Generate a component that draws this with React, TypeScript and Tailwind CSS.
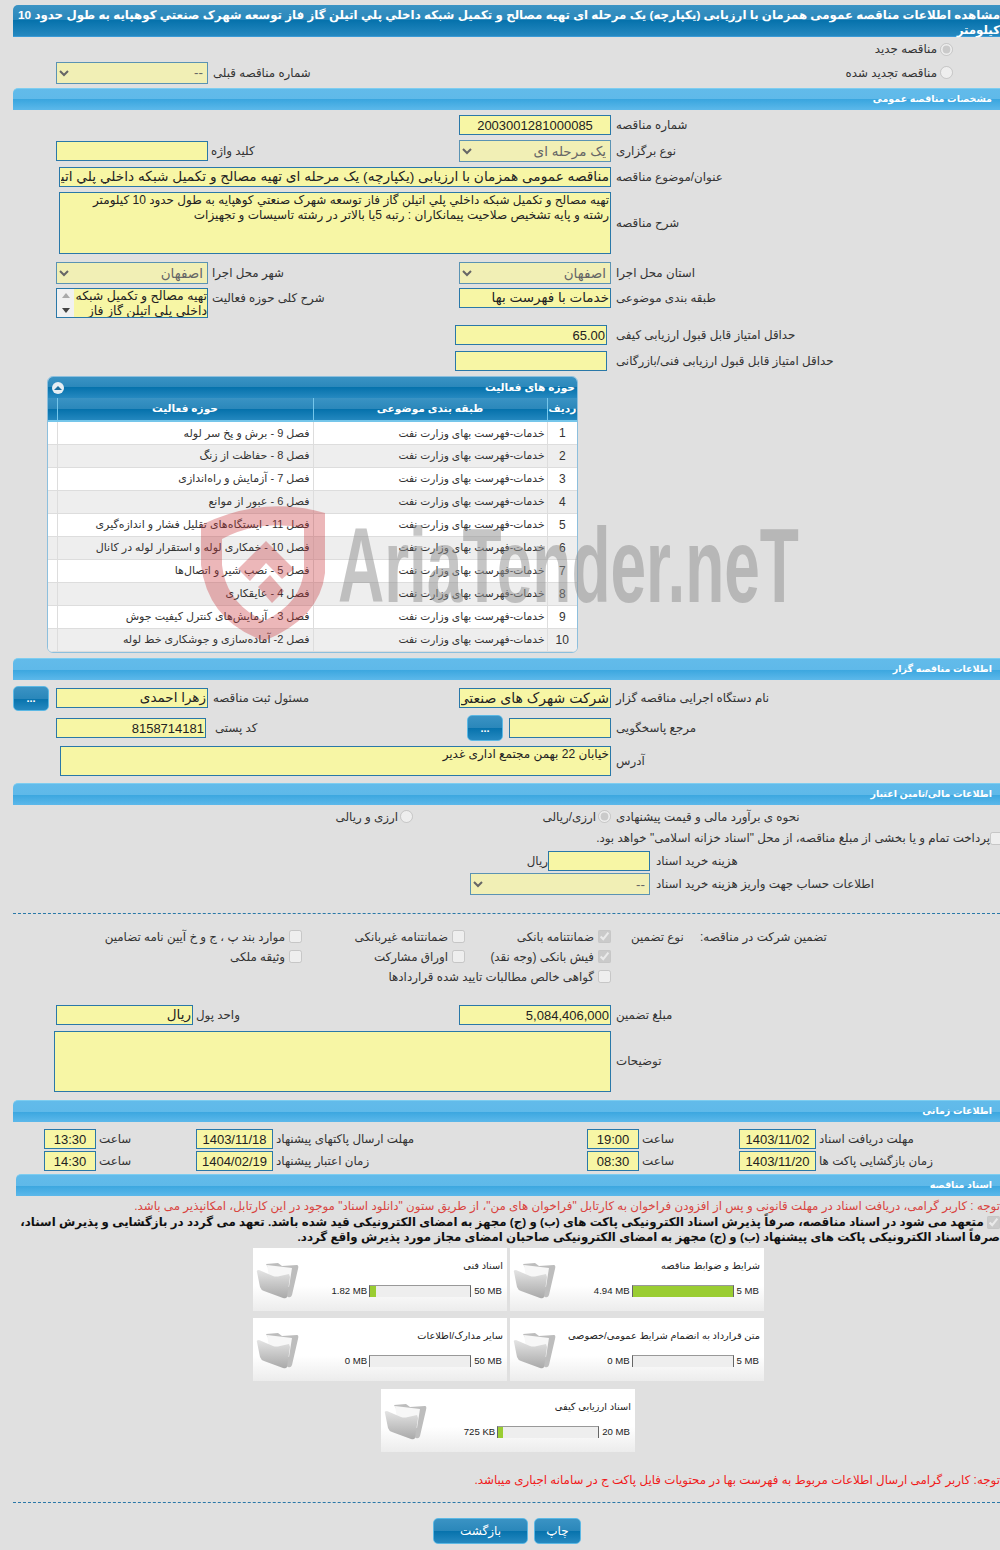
const activities = [
  "فصل 9 - برش و پخ سر لوله",
  "فصل 8 - حفاظت از زنگ",
  "فصل 7 - آزمایش و راه‌اندازی",
  "فصل 6 - عبور از موانع",
  "فصل 11 - ایستگاه‌های تقلیل فشار و اندازه‌گیری",
  "فصل 10 - خمکاری لوله و استقرار لوله در کانال",
  "فصل 5 - نصب شیر و اتصال‌ها",
  "فصل 4 - عایقکاری",
  "فصل 3 - آزمایش‌های کنترل کیفیت جوش",
  "فصل 2- آماده‌سازی و جوشکاری خط لوله",
]

const barBg = "bg-[linear-gradient(#3a93c4_0%,#2a87ba_50%,#0672ac_50%,#2689c0_100%)]"
const inputCls = "border border-[#2a78a8] bg-[#f7f6a5] text-[#222] px-[1px] outline-none"
const selectCls = "border border-[#5b93b3] bg-[#f1efb5] text-[13.5px] text-[#666] outline-none"

const Section = ({ title }: { title: string }) => (
  <div
    dir="rtl"
    className="h-[22px] border-t border-[#7dcdf0] bg-[linear-gradient(#62bbea_0%,#5fb9e9_50%,#3aa6df_50%,#5cb8ea_100%)] rounded-tl-[5px] pr-[8px] flex items-center text-[9.5px] font-bold text-white whitespace-nowrap"
  >
    {title}
  </div>
)

const Field = ({ value, className = "" }: { value?: string; className?: string }) => (
  <input readOnly dir="rtl" value={value ?? ""} className={`${inputCls} h-[20px] text-[13.5px] ${className}`} />
)

const Num = ({ value, className = "" }: { value: string; className?: string }) => (
  <input readOnly value={value} className={`${inputCls} h-[20px] text-[13px] ${className}`} />
)

const Select = ({ value, className = "" }: { value: string; className?: string }) => (
  <select disabled dir="rtl" defaultValue={value} className={`${selectCls} h-[22px] ${className}`}>
    <option>{value}</option>
  </select>
)

const Label = ({ children, className = "" }: { children: React.ReactNode; className?: string }) => (
  <span dir="rtl" className={`pt-[2px] text-[11.85px] text-left text-[#333] whitespace-nowrap ${className}`}>
    {children}
  </span>
)

const Check = ({ label, checked }: { label: string; checked?: boolean }) => (
  <label className="flex justify-end items-center gap-[4px]">
    <Label>{label}</Label>
    <input type="checkbox" disabled defaultChecked={checked} className="shrink-0" />
  </label>
)

const DotsButton = ({ className = "" }: { className?: string }) => (
  <button className={`w-[36px] h-[25px] rounded-[5px] border border-[#5cb8e4] ${barBg} text-white text-[11px] font-bold ${className}`}>
    ...
  </button>
)

const Folder = () => (
  <svg width="44" height="38" viewBox="0 0 44 38" className="shrink-0">
    <defs>
      <linearGradient id="folderFront" x1="0" y1="0" x2="0" y2="1">
        <stop offset="0" stopColor="#e4e4e4" />
        <stop offset="1" stopColor="#a9a9a9" />
      </linearGradient>
    </defs>
    <path d="M10 3 L22 2 L26 5 L41 4 Q43 4 42 8 L36 34 Q35 37 32 36 L28 34 Z" fill="#bdbdbd" />
    <path d="M11 4 L36 7 L33 26 L14 22 Z" fill="#f7f7f7" />
    <path d="M1 11 Q0 9 3 9 L17 15 Q20 16 24 15 L33 13 L34 16 L31 36 Q30 38 27 37 L8 30 Q5 29 4 26 Z" fill="url(#folderFront)" />
  </svg>
)

const DocCard = ({ title, used, max, pct }: { title: string; used: string; max: string; pct: number }) => (
  <div className="w-[254px] h-[63px] flex bg-[linear-gradient(#ffffff_0%,#ffffff_60%,#ececec_100%)]">
    <div className="pl-[3px] pt-[13px]">
      <Folder />
    </div>
    <div className="flex-1 flex flex-col items-end pr-[4px] pt-[11px]">
      <span dir="rtl" className="text-[9.8px] text-[#222] whitespace-nowrap">{title}</span>
      <div className="mt-[10px] flex items-center text-[9.6px] text-[#222]">
        <span className="mr-[2px]">{used}</span>
        <div className="w-[102px] h-[12px] bg-[#eeeeee] border-t border-[#999] border-x border-x-[#666]">
          <div className="h-full bg-[#9acd32]" style={{ width: `${pct}%` }} />
        </div>
        <span className="ml-[3px] mr-[1px]">{max}</span>
      </div>
    </div>
  </div>
)

const Watermark = () => (
  <div className="absolute inset-0 pointer-events-none">
    <svg width="130" height="140" viewBox="0 0 130 140" className="absolute left-[198px] top-[503px] opacity-35">
      <path
        fillRule="evenodd"
        fill="#c9343a"
        d="M3 22 Q65 -8 127 10 L127 70 Q122 115 66 138 Q10 118 3 62 Z M24 36 L24 62 Q28 100 66 118 Q104 100 106 66 L106 25 Q62 16 24 36 Z"
      />
      <path fill="#c9343a" d="M40 66 L68 38 L96 66 L84 76 L68 60 L52 78 Z M60 84 L72 72 L86 88 L74 100 Z" />
    </svg>
    <div className="absolute left-[338px] top-[505px] origin-left scale-x-[0.615] scale-y-[1.02] text-[104px] leading-[120px] font-bold text-[#8f8f8f] opacity-50 whitespace-nowrap">
      AriaTender.neT
    </div>
  </div>
)

const TimeRow = ({ a, b, aLabel, c, d, cLabel, className = "" }: { a: string; b: string; aLabel: string; c: string; d: string; cLabel: string; className?: string }) => (
  <div className={`h-[20px] flex items-center pl-[44px] ${className}`}>
    <Num value={a} className="w-[52px] text-center" />
    <Label className="ml-[3px] w-[97px]">ساعت</Label>
    <Num value={b} className="w-[77px] text-center" />
    <Label className="ml-[3px] w-[311px]">{aLabel}</Label>
    <Num value={c} className="w-[52px] text-center" />
    <Label className="ml-[3px] w-[97px]">ساعت</Label>
    <Num value={d} className="w-[77px] text-center" />
    <Label className="ml-[3px]">{cLabel}</Label>
  </div>
)

export default function App() {
  return (
    <div className="relative w-[1000px] h-[1550px] overflow-hidden bg-[#e0e0e0] font-['Liberation_Sans','DejaVu_Sans',sans-serif] text-[11px] text-[#333]">
      <div className="pl-[13px] pt-[5px]">
        <div
          dir="rtl"
          className={`h-[32px] rounded-tl-[5px] border-b border-[#3a9ad6] ${barBg} text-white text-[11.8px] font-bold leading-[15px] pt-[3px]`}
        >
          مشاهده اطلاعات مناقصه عمومی همزمان با ارزیابی (یکپارچه) یک مرحله ای تهیه مصالح و تکمیل شبکه داخلي پلي اتيلن گاز فاز توسعه شهرک صنعتي کوهپایه به طول حدود 10 کیلومتر
        </div>
      </div>

      <div className="h-[24px] flex items-center justify-end pr-[47px] gap-[3px]">
        <Label>مناقصه جدید</Label>
        <input type="radio" disabled defaultChecked />
      </div>
      <div className="h-[23px] flex items-center pl-[56px] pr-[47px]">
        <Select value="--" className="w-[152px]" />
        <Label className="ml-[5px]">شماره مناقصه قبلی</Label>
        <div className="ml-auto flex items-center gap-[3px]">
          <Label>مناقصه تجدید شده</Label>
          <input type="radio" disabled />
        </div>
      </div>

      <div className="pl-[13px] mt-[4px]">
        <Section title="مشخصات مناقصه عمومی" />
      </div>

      <div className="mt-[2px] h-[26px] flex items-center pl-[459px]">
        <Num value="2003001281000085" className="w-[152px] text-center" />
        <Label className="ml-[5px]">شماره مناقصه</Label>
      </div>
      <div className="h-[26px] flex items-center pl-[56px]">
        <Field className="w-[152px]" />
        <Label className="ml-[3px] w-[248px]">کلید واژه</Label>
        <Select value="یک مرحله ای" className="w-[152px]" />
        <Label className="ml-[5px]">نوع برگزاری</Label>
      </div>
      <div className="h-[26px] flex items-center pl-[59px]">
        <input
          readOnly
          dir="rtl"
          className={`${inputCls} h-[20px] text-[13.7px] w-[552px]`}
          value="مناقصه عمومی همزمان با ارزیابی (یکپارچه) یک مرحله ای تهیه مصالح و تکمیل شبکه داخلي پلي اتيلن گاز فاز توسعه شهرک صنعتي کوهپایه به طول حدود 10 کیلومتر"
        />
        <Label className="ml-[5px]">عنوان/موضوع مناقصه</Label>
      </div>
      <div className="mt-[2px] h-[62px] flex items-center pl-[59px]">
        <textarea
          readOnly
          dir="rtl"
          className={`${inputCls} w-[552px] h-[62px] resize-none leading-[15px] text-[12px]`}
          value={"تهیه مصالح و تکمیل شبکه داخلي پلي اتيلن گاز فاز توسعه شهرک صنعتي کوهپایه به طول حدود 10 کیلومتر\nرشته و پایه تشخیص صلاحیت پیمانکاران : رتبه 5یا بالاتر در رشته تاسیسات و تجهیزات"}
        />
        <Label className="ml-[5px]">شرح مناقصه</Label>
      </div>
      <div className="mt-[8px] h-[22px] flex items-center pl-[56px]">
        <Select value="اصفهان" className="w-[152px]" />
        <Label className="ml-[4px] w-[247px]">شهر محل اجرا</Label>
        <Select value="اصفهان" className="w-[152px]" />
        <Label className="ml-[5px]">استان محل اجرا</Label>
      </div>
      <div className="mt-[4px] h-[30px] flex items-start pl-[56px]">
        <div className="w-[152px] h-[30px] border border-[#2a78a8] flex overflow-hidden">
          <div className="w-[17px] shrink-0 bg-[#f1f1f1] flex flex-col items-center justify-between py-[4px]">
            <span className="w-0 h-0 border-x-[4px] border-x-transparent border-b-[5px] border-b-[#aaaaaa]" />
            <span className="w-0 h-0 border-x-[4px] border-x-transparent border-t-[5px] border-t-[#444444]" />
          </div>
          <div dir="rtl" className="flex-1 overflow-hidden bg-[#f7f6a5] text-[12.5px] leading-[15px] text-[#222]">
            تهیه مصالح و تکمیل شبکه داخلي پلي اتيلن گاز فاز
          </div>
        </div>
        <Label className="ml-[4px] w-[247px]">شرح کلی حوزه فعالیت</Label>
        <Field className="w-[152px]" value="خدمات با فهرست بها" />
        <Label className="ml-[5px]">طبقه بندی موضوعی</Label>
      </div>
      <div className="mt-[7px] h-[20px] flex items-center pl-[455px]">
        <Num value="65.00" className="w-[152px] text-right" />
        <Label className="ml-[9px]">حداقل امتیاز قابل قبول ارزیابی کیفی</Label>
      </div>
      <div className="mt-[6px] h-[20px] flex items-center pl-[455px]">
        <Field className="w-[152px]" />
        <Label className="ml-[9px]">حداقل امتیاز قابل قبول ارزیابی فنی/بازرگانی</Label>
      </div>

      <div className="mt-[5px] ml-[47px] w-[531px] h-[277px] rounded-[6px] border border-[#8dbfdd] overflow-hidden bg-white">
        <div dir="rtl" className={`h-[21px] flex items-center justify-between pr-[2px] pl-[4px] ${barBg} text-white text-[10.6px] font-bold`}>
          <span>حوزه های فعالیت</span>
          <span className="w-[12px] h-[12px] rounded-full bg-[#e6eef3] flex items-center justify-center">
            <span className="w-0 h-0 border-x-[4px] border-x-transparent border-b-[4px] border-b-[#1c6f9f]" />
          </span>
        </div>
        <table dir="rtl" className="w-full table-fixed border-collapse text-[11px] text-[#333]">
          <colgroup>
            <col className="w-[30px]" />
            <col className="w-[234px]" />
            <col className="w-[256px]" />
            <col />
          </colgroup>
          <thead>
            <tr className={`h-[23px] ${barBg} text-white text-[10.6px] font-bold`}>
              <th className="border-l border-b-2 border-[#75c6ea] font-bold">ردیف</th>
              <th className="border-l border-b-2 border-[#75c6ea] font-bold">طبقه بندی موضوعی</th>
              <th className="border-l border-b-2 border-[#75c6ea] font-bold">حوزه فعالیت</th>
              <th className="border-b-2 border-[#75c6ea]" />
            </tr>
          </thead>
          <tbody>
            {activities.map((activity, i) => (
              <tr key={activity} className={`h-[23px] border-b border-[#dddddd] ${i % 2 ? "bg-[#eeeeee]" : "bg-white"}`}>
                <td className="border-l border-[#dddddd] text-center text-[12px]">{i + 1}</td>
                <td className="border-l border-[#dddddd] pr-[2px] text-[10.7px] whitespace-nowrap">خدمات-فهرست بهای وزارت نفت</td>
                <td className="border-l border-[#dddddd] pr-[3px] whitespace-nowrap">{activity}</td>
                <td />
              </tr>
            ))}
          </tbody>
        </table>
      </div>

      <div className="pl-[13px] mt-[5px]">
        <Section title="اطلاعات مناقصه گزار" />
      </div>
      <div className="mt-[5px] h-[26px] flex items-center pl-[13px]">
        <DotsButton />
        <Field className="ml-[7px] w-[152px]" value="زهرا احمدی" />
        <Label className="ml-[5px] w-[246px]">مسئول ثبت مناقصه</Label>
        <input readOnly dir="rtl" className={`${inputCls} h-[20px] text-[14px] w-[152px]`} value="شرکت شهرک های صنعتی" />
        <Label className="ml-[5px]">نام دستگاه اجرایی مناقصه گزار</Label>
      </div>
      <div className="mt-[4px] h-[26px] flex items-center pl-[56px]">
        <Num value="8158714181" className="w-[150px] text-right" />
        <Label className="ml-[9px] w-[252px]">کد پستی</Label>
        <DotsButton className="h-[26px]" />
        <Field className="ml-[6px] w-[102px]" />
        <Label className="ml-[5px]">مرجع پاسخگویی</Label>
      </div>
      <div className="mt-[5px] h-[30px] flex items-center pl-[60px]">
        <textarea
          readOnly
          dir="rtl"
          className={`${inputCls} w-[551px] h-[30px] resize-none leading-[15px] text-[12px]`}
          value="خیابان 22 بهمن مجتمع اداری غدیر"
        />
        <Label className="ml-[5px]">آدرس</Label>
      </div>

      <div className="pl-[13px] mt-[7px]">
        <Section title="اطلاعات مالی/تامین اعتبار" />
      </div>
      <div className="mt-[1px] h-[22px] flex items-center pl-[300px]">
        <div className="w-[113px] flex items-center justify-end gap-[2px]">
          <Label>ارزی و ریالی</Label>
          <input type="radio" disabled />
        </div>
        <div className="w-[198px] flex items-center justify-end gap-[2px]">
          <Label>ارزی/ریالی</Label>
          <input type="radio" disabled defaultChecked />
        </div>
        <Label className="ml-[5px]">نحوه ی برآورد مالی و قیمت پیشنهادی</Label>
      </div>
      <div className="h-[20px] flex items-center justify-end -mr-[3px]">
        <Label>پرداخت تمام و یا بخشی از مبلغ مناقصه، از محل "اسناد خزانه اسلامی" خواهد بود.</Label>
        <input type="checkbox" disabled />
      </div>
      <div className="mt-[3px] h-[20px] flex items-center pl-[527px]">
        <Label className="w-[21px]">ریال</Label>
        <Field className="w-[102px]" />
        <Label className="ml-[6px]">هزینه خرید اسناد</Label>
      </div>
      <div className="mt-[2px] h-[22px] flex items-center pl-[470px]">
        <Select value="--" className="w-[180px]" />
        <Label className="ml-[6px]">اطلاعات حساب جهت واریز هزینه خرید اسناد</Label>
      </div>

      <div className="mt-[18px] ml-[13px] border-t border-dashed border-[#2a78a8]" />

      <div className="mt-[13px] h-[20px] grid grid-cols-[202px_163px_146px_89px_auto] items-center pl-[100px]">
        <Check label="موارد بند پ ، ج و خ آیین نامه تضامین" />
        <Check label="ضمانتنامه غیربانکی" />
        <Check label="ضمانتنامه بانکی" checked />
        <Label className="pl-[20px]">نوع تضمین</Label>
        <Label>تضمین شرکت در مناقصه:</Label>
      </div>
      <div className="h-[20px] grid grid-cols-[202px_163px_146px] items-center pl-[100px]">
        <Check label="وثیقه ملکی" />
        <Check label="اوراق مشارکت" />
        <Check label="فیش بانکی (وجه نقد)" checked />
      </div>
      <div className="h-[20px] flex items-center justify-end pr-[389px]">
        <Check label="گواهی خالص مطالبات تایید شده قراردادها" />
      </div>

      <div className="mt-[18px] h-[20px] flex items-center pl-[56px]">
        <Field className="w-[137px]" value="ریال" />
        <Label className="ml-[3px] w-[263px]">واحد پول</Label>
        <Num value="5,084,406,000" className="w-[152px] text-right" />
        <Label className="ml-[5px]">مبلغ تضمین</Label>
      </div>
      <div className="mt-[6px] h-[60px] flex items-center pl-[54px]">
        <textarea readOnly dir="rtl" value="" className={`${inputCls} w-[557px] h-[61px] resize-none`} />
        <Label className="ml-[5px]">توضیحات</Label>
      </div>

      <div className="pl-[13px] mt-[9px]">
        <Section title="اطلاعات زمانی" />
      </div>
      <TimeRow className="mt-[7px]" a="13:30" b="1403/11/18" aLabel="مهلت ارسال پاکتهای پیشنهاد" c="19:00" d="1403/11/02" cLabel="مهلت دریافت اسناد" />
      <TimeRow className="mt-[2px]" a="14:30" b="1404/02/19" aLabel="زمان اعتبار پیشنهاد" c="08:30" d="1403/11/20" cLabel="زمان بازگشایی پاکت ها" />

      <div className="pl-[16px] mt-[3px]">
        <Section title="اسناد مناقصه" />
      </div>
      <div dir="rtl" className="mt-[2px] h-[16px] leading-[16px] whitespace-nowrap text-[11.85px] text-[#d9443f]">
        توجه : کاربر گرامی، دریافت اسناد در مهلت قانونی و پس از افزودن فراخوان به کارتابل "فراخوان های من"، از طریق ستون "دانلود اسناد" موجود در این کارتابل، امکانپذیر می باشد.
      </div>
      <div dir="rtl" className="pt-[1px] h-[31px] leading-[15px] text-[11.8px] font-bold text-[#111]">
        <input type="checkbox" disabled defaultChecked className="align-middle" />
        {" "}متعهد می شود در اسناد مناقصه، صرفاً پذیرش اسناد الکترونیکی پاکت های (ب) و (ج) مجهز به امضای الکترونیکی قید شده باشد. تعهد می گردد در بازگشایی و پذیرش اسناد، صرفاً اسناد الکترونیکی پاکت های پیشنهاد (ب) و (ج) مجهز به امضای الکترونیکی صاحبان امضای مجاز مورد پذیرش واقع گردد.
      </div>

      <div className="mt-[3px] ml-[253px] w-[510px] grid grid-cols-[254px_254px] gap-x-[3px] gap-y-[7px]">
        <DocCard title="اسناد فنی" used="1.82 MB" max="50 MB" pct={6} />
        <DocCard title="شرایط و ضوابط مناقصه" used="4.94 MB" max="5 MB" pct={100} />
        <DocCard title="سایر مدارک/اطلاعات" used="0 MB" max="50 MB" pct={0} />
        <DocCard title="متن قرارداد به انضمام شرایط عمومی/خصوصی" used="0 MB" max="5 MB" pct={0} />
      </div>
      <div className="mt-[8px] ml-[381px] w-[254px]">
        <DocCard title="اسناد ارزیابی کیفی" used="725 KB" max="20 MB" pct={5} />
      </div>

      <div dir="rtl" className="mt-[20px] h-[16px] leading-[16px] text-[11.85px] text-[#f01a1a] whitespace-nowrap">
        توجه: کاربر گرامی ارسال اطلاعات مربوط به فهرست بها در محتویات فایل پاکت ج در سامانه اجباری میباشد.
      </div>

      <div className="mt-[14px] ml-[13px] border-t border-dashed border-[#2a78a8]" />

      <div className="mt-[15px] flex justify-center gap-[6px] pl-[14px]">
        <button className={`w-[95px] h-[26px] rounded-[5px] border border-[#5cb8e4] ${barBg} text-white text-[12px]`}>
          بازگشت
        </button>
        <button className={`w-[47px] h-[26px] rounded-[5px] border border-[#5cb8e4] ${barBg} text-white text-[12px]`}>
          چاپ
        </button>
      </div>

      <Watermark />
    </div>
  )
}
